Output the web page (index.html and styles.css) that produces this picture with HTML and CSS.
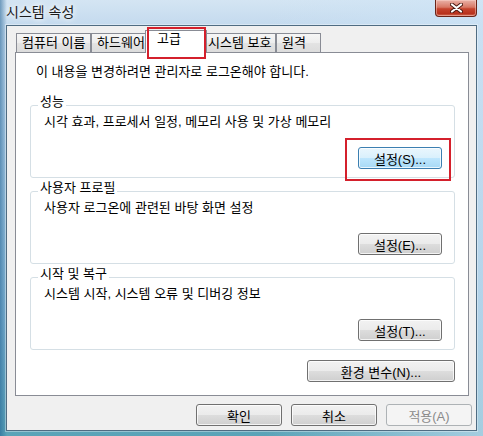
FILE: index.html
```html
<!DOCTYPE html>
<html lang="ko">
<head>
    <meta charset="UTF-8">
    <title>시스템 속성</title>
    <link rel="stylesheet" href="styles.css">
</head>
<body>
    <div class="window">
        <div class="titlebar">
            <span class="title">시스템 속성</span>
            <button class="close" title="닫기">
                <svg width="13" height="10" viewBox="0 0 13 10">
                    <path d="M2 1.5 L11 8.5 M11 1.5 L2 8.5" stroke="#4a1810" stroke-width="4" stroke-linecap="round"/>
                    <path d="M2 1.5 L11 8.5 M11 1.5 L2 8.5" stroke="#fff" stroke-width="2.2" stroke-linecap="round"/>
                </svg>
            </button>
        </div>
        <div class="client">
            <div class="tabs">
                <div class="tab t1">컴퓨터 이름</div>
                <div class="tab t2">하드웨어</div>
                <div class="tab active">고급<span class="mark mark-tab"></span></div>
                <div class="tab t4">시스템 보호</div>
                <div class="tab t5">원격</div>
            </div>
            <div class="panel">
                <p class="notice">이 내용을 변경하려면 관리자로 로그온해야 합니다.</p>
                <fieldset class="group">
                    <legend>성능</legend>
                    <p>시각 효과, 프로세서 일정, 메모리 사용 및 가상 메모리</p>
                    <div class="actions">
                        <span class="marked">
                            <button class="btn small default">설정(S)...</button>
                            <span class="mark mark-btn"></span>
                        </span>
                    </div>
                </fieldset>
                <fieldset class="group">
                    <legend>사용자 프로필</legend>
                    <p>사용자 로그온에 관련된 바탕 화면 설정</p>
                    <div class="actions">
                        <button class="btn small">설정(E)...</button>
                    </div>
                </fieldset>
                <fieldset class="group">
                    <legend>시작 및 복구</legend>
                    <p>시스템 시작, 시스템 오류 및 디버깅 정보</p>
                    <div class="actions">
                        <button class="btn small">설정(T)...</button>
                    </div>
                </fieldset>
                <div class="actions env">
                    <button class="btn wide">환경 변수(N)...</button>
                </div>
            </div>
            <div class="footer">
                <button class="btn">확인</button>
                <button class="btn">취소</button>
                <button class="btn" disabled>적용(A)</button>
            </div>
        </div>
    </div>
</body>
</html>
```

FILE: styles.css
```css
body {
    margin: 0;
    font-family: "Liberation Sans", "Noto Sans CJK KR", sans-serif;
    font-size: 13px;
    color: #000;
}
.window {
    width: 483px;
    height: 436px;
    box-sizing: border-box;
    padding: 0 6px 5px 6px;
    display: flex;
    flex-direction: column;
    background:
        linear-gradient(90deg, rgba(30, 95, 145, 0.55) 0px, rgba(30, 95, 145, 0) 7px),
        linear-gradient(90deg, rgba(205, 228, 246, 0) 55%, rgba(205, 228, 246, 0.65) 100%),
        linear-gradient(180deg, #d4e5f3 0px, #c4daee 25px, #a9cae4 150px, #80b3d2 320px, #5aa3b7 436px);
}
.titlebar {
    height: 25px;
    flex: none;
    display: flex;
    justify-content: space-between;
    align-items: flex-start;
}
.title {
    margin-top: 5px;
    font-size: 14px;
    line-height: 15px;
    color: #1b1b1b;
    text-shadow: 0 0 5px #fff, 0 0 9px #fff;
}
.close {
    width: 42px;
    height: 17px;
    padding: 0;
    border: 1px solid #6a2418;
    border-top: 0;
    border-radius: 0 0 4px 4px;
    background: linear-gradient(180deg, #eab2a8 0%, #d87865 45%, #c5432d 55%, #b8321d 85%, #d5705a 100%);
    box-shadow: inset 0 0 0 1px rgba(255, 220, 210, 0.45);
    display: flex;
    align-items: center;
    justify-content: center;
}
.client {
    flex: 1;
    display: flex;
    flex-direction: column;
    border: 1px solid #4f6c82;
    box-shadow: 0 0 0 1px rgba(255, 255, 255, 0.35);
    background: #f0f0f0;
    padding: 4px 7px 4px 8px;
}
.tabs {
    display: flex;
    align-items: flex-end;
    padding-left: 1px;
}
.tab {
    box-sizing: border-box;
    height: 19px;
    line-height: 18px;
    padding-left: 5px;
    border: 1px solid #898c95;
    border-bottom: 0;
    background: linear-gradient(180deg, #f6f6f6 0%, #ededed 50%, #e3e3e3 51%, #dcdcdc 100%);
    white-space: nowrap;
}
.t1 { width: 75px; }
.t2 { width: 56px; }
.t4 { width: 71px; padding-left: 2px; }
.t5 { width: 45px; }
.tab.active {
    position: relative;
    z-index: 1;
    width: 62px;
    height: 23px;
    line-height: 16px;
    padding-left: 11px;
    margin: 0 -2px -1px -2px;
    background: #fff;
}
.mark {
    position: absolute;
    box-sizing: border-box;
    border: 2px solid #d4202c;
}
.mark-tab {
    left: 1px;
    right: 0;
    top: -4px;
    bottom: -6px;
}
.panel {
    background: #fff;
    border: 1px solid #898c95;
    padding: 12px 13px 13px 14px;
}
.notice {
    margin: 0 0 17px 6px;
    line-height: 14px;
}
.group {
    margin: 0 0 4px 0;
    padding: 1px 12px 8px 13px;
    border: 1px solid #d5dfe5;
    border-radius: 3px;
}
.group legend {
    margin-left: -6px;
    padding: 0 2px 6px 2px;
    line-height: 12px;
}
.group p {
    margin: 0;
    line-height: 14px;
}
.actions {
    display: flex;
    justify-content: flex-end;
    margin-top: 18px;
}
.env {
    margin-top: 10px;
}
.marked {
    position: relative;
    display: inline-block;
}
.mark-btn {
    left: -13px;
    right: -9px;
    top: -9px;
    bottom: -12px;
}
.btn {
    box-sizing: border-box;
    height: 22px;
    width: 86px;
    padding: 0;
    font-family: inherit;
    font-size: 13px;
    color: #000;
    border: 1px solid #707070;
    border-radius: 3px;
    background: linear-gradient(180deg, #f2f2f2 0%, #ebebeb 50%, #dddddd 51%, #cfcfcf 100%);
    box-shadow: inset 0 0 0 1px rgba(255, 255, 255, 0.75);
    display: block;
}
.btn.small { width: 84px; }
.btn.wide { width: 148px; }
.btn.default {
    border-color: #3c7fb1;
    background: linear-gradient(180deg, #eaf6fd 0%, #d9f0fc 50%, #bee6fd 51%, #a7d9f5 100%);
}
.btn:disabled {
    border-color: #adb2b5;
    background: #f4f4f4;
    color: #8a8a8a;
    box-shadow: none;
}
.footer {
    display: flex;
    justify-content: flex-end;
    gap: 9px;
    margin: 8px -3px 0 0;
}
```
